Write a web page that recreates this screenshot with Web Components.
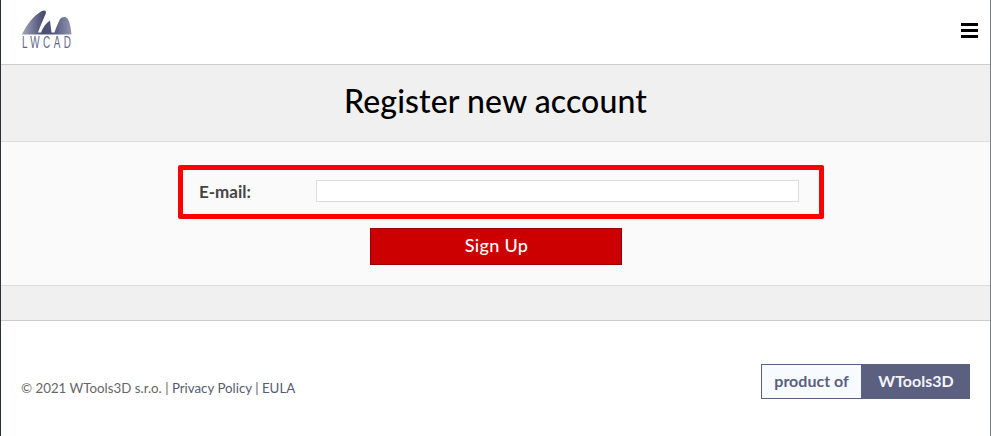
<!DOCTYPE html>
<html lang="en"><head><meta charset="utf-8"><title>Register new account</title>
<style>html,body{margin:0;padding:0;background:#fff}body{width:991px;height:436px;overflow:hidden}</style>
</head><body>
<lw-page>
  <lw-header></lw-header>
  <lw-title-band>Register new account</lw-title-band>
  <lw-signup></lw-signup>
  <lw-spacer-band></lw-spacer-band>
  <lw-footer></lw-footer>
</lw-page>
<script>
function def(name, html){
  customElements.define(name, class extends HTMLElement{
    constructor(){super();this.attachShadow({mode:'open'}).innerHTML=html;}
  });
}
def('lw-page',`<style>:host{display:flex;flex-direction:column;width:991px;height:436px;box-sizing:border-box;border-left:1px solid #2b3138;border-right:1px solid #7a7f85;font-family:Lato,"Liberation Sans",sans-serif;background:#fff}</style><slot></slot>`);
def('lw-header',`<style>:host{display:flex;justify-content:space-between;align-items:flex-start;height:64px;border-bottom:1px solid #ccc;background:#fff;flex:none}
.logo{display:flex;flex-direction:column;margin:10px 0 0 20px;width:52px}
svg{display:block}
.t{font:16.5px/12px "Liberation Sans",sans-serif;letter-spacing:5.8px;color:#62678a;margin:1px 0 0 1px;white-space:nowrap;transform:scaleX(.6);transform-origin:left}
.m{margin:23px 12px 0 0;width:17px;display:flex;flex-direction:column;gap:3px}.m i{display:block;height:3px;background:#000}</style>
<div class="logo"><svg width="52" height="25" viewBox="0 0 52 25"><defs><linearGradient id="g" x1="0" x2="1" y1="0" y2="0"><stop offset="0" stop-color="#a3a6bd"/><stop offset=".42" stop-color="#4a4e70"/><stop offset=".62" stop-color="#50547a"/><stop offset="1" stop-color="#9295b0"/></linearGradient></defs><path fill="url(#g)" d="M1 24 C6 15 12 6 20 1.5 C23 0 25 0 25 3 C23 8 20 14 17 22.5 L20 22.5 C22 17 25 13 29 10.5 L30.5 22.5 L33.5 22.5 C35 18 37 13 39 9 C41 6.5 45 6 47 9 C49 13 50 19 50.5 24.5 L1 24.5Z"/></svg><div class="t">LWCAD</div></div>
<div class="m" aria-label="Menu"><i></i><i></i><i></i></div>`);
def('lw-title-band',`<style>:host{display:flex;justify-content:center;align-items:center;height:76px;flex:none;background:#f0f0f0;border-bottom:1px solid #ddd;font:500 32px/1 Lato,sans-serif;letter-spacing:.1px;color:#000}
div{margin-top:-4px}</style><div><slot></slot></div>`);
def('lw-signup',`<style>:host{display:flex;flex-direction:column;align-items:center;height:144px;flex:none;box-sizing:border-box;padding-top:23px;background:#fafafa;border-bottom:1px solid #ddd}
.row{box-sizing:border-box;width:646px;height:54px;margin-left:11px;border:5px solid #f00;border-radius:2px;display:flex;align-items:center;padding:0 20px 0 16px}
label{width:117px;flex:none;font:700 17px/1 Lato,sans-serif;color:#444;margin-top:-2px}
input{flex:1;min-width:0;box-sizing:border-box;height:22px;border:1px solid #ddd;background:#fff;margin:0;padding:0;position:relative;top:-1px}
button{margin-top:9px;width:252px;height:37px;box-sizing:border-box;background:#c00;border:1px solid #900;color:#fff;font:500 18px/1 Lato,sans-serif;letter-spacing:.3px;padding:0 0 3px 2px}</style>
<div class="row"><label>E-mail:</label><input type="text"></div>
<button>Sign Up</button>`);
def('lw-spacer-band',`<style>:host{display:block;height:34px;flex:none;background:#f0f0f0;border-bottom:1px solid #ccc}</style>`);
def('lw-footer',`<style>:host{display:flex;justify-content:space-between;align-items:flex-start;flex:1;background:#fff;padding:43px 20px 0 20px;font:400 13.3px/1 Lato,sans-serif;color:#555b70}
.c{margin-top:18px;white-space:nowrap}.c span{color:#666}
.b{display:flex;height:35px;width:209px;font:700 16px/1 Lato,sans-serif}
.l{box-sizing:border-box;width:101px;border:1px solid #5b5f80;background:#f7fbff;color:#5b5f80;display:flex;align-items:center;justify-content:center;padding-bottom:2px}
.r{flex:1;background:#5b5f80;color:#f2f4fa;display:flex;align-items:center;justify-content:center;padding-bottom:2px}</style>
<div class="c"><span>© 2021 WTools3D s.r.o. | </span>Privacy Policy | EULA</div>
<div class="b"><div class="l">product of</div><div class="r">WTools3D</div></div>`);
</script>
</body></html>
